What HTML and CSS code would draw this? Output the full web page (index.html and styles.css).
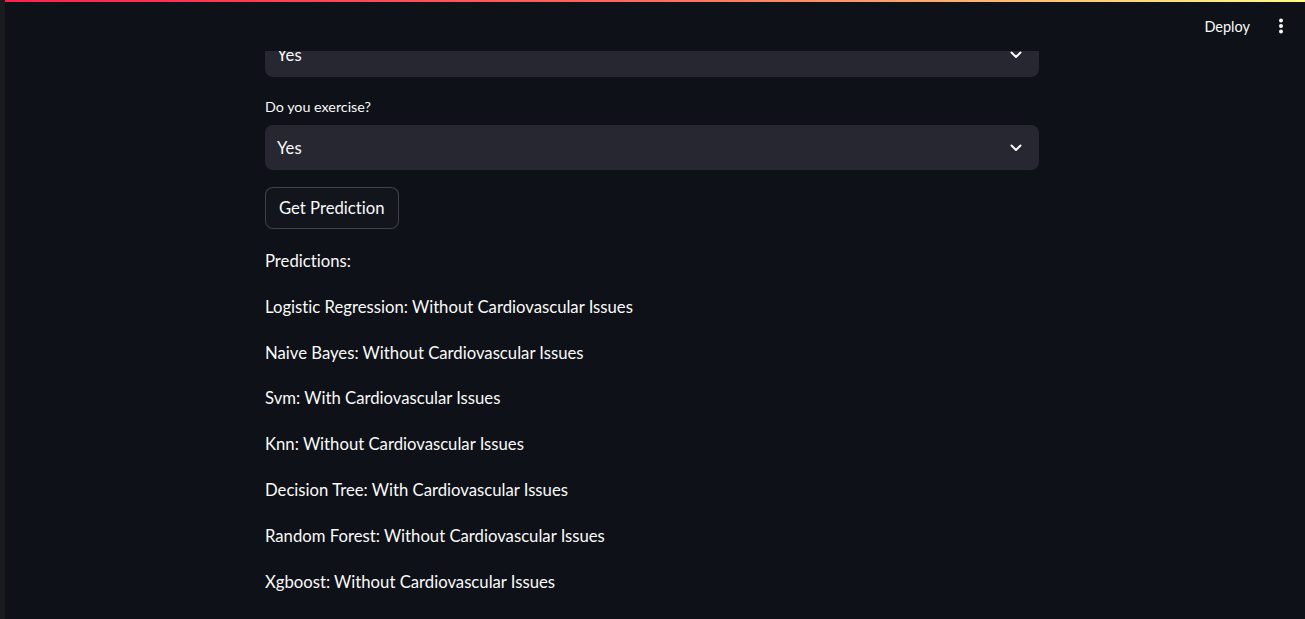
FILE: index.html
```html
<!DOCTYPE html>
<html lang="en">
<head>
<meta charset="utf-8">
<title>Cardiovascular Prediction</title>
<link rel="stylesheet" href="styles.css">
</head>
<body>
<div class="app">
  <div class="edge"></div>
  <div class="view">
    <header class="header">
      <div class="decoration"></div>
      <span class="deploy">Deploy</span>
      <svg class="menu" width="6" height="16" viewBox="0 0 6 16" aria-hidden="true">
        <circle cx="3" cy="2.5" r="2" fill="#fafafa"/>
        <circle cx="3" cy="8" r="2" fill="#fafafa"/>
        <circle cx="3" cy="13.5" r="2" fill="#fafafa"/>
      </svg>
    </header>
    <main class="main">
      <div class="select first">
        <span class="value">Yes</span>
        <svg class="chev" width="12" height="8" viewBox="0 0 12 8" aria-hidden="true"><path d="M1.5 1.5 L6 6 L10.5 1.5" fill="none" stroke="#fafafa" stroke-width="2" stroke-linecap="round" stroke-linejoin="round"/></svg>
      </div>
      <div class="field">
        <label class="label">Do you exercise?</label>
        <div class="select">
          <span class="value">Yes</span>
          <svg class="chev" width="12" height="8" viewBox="0 0 12 8" aria-hidden="true"><path d="M1.5 1.5 L6 6 L10.5 1.5" fill="none" stroke="#fafafa" stroke-width="2" stroke-linecap="round" stroke-linejoin="round"/></svg>
        </div>
      </div>
      <button class="btn">Get Prediction</button>
      <div class="results">
        <p>Predictions:</p>
        <p>Logistic Regression: Without Cardiovascular Issues</p>
        <p>Naive Bayes: Without Cardiovascular Issues</p>
        <p>Svm: With Cardiovascular Issues</p>
        <p>Knn: Without Cardiovascular Issues</p>
        <p>Decision Tree: With Cardiovascular Issues</p>
        <p>Random Forest: Without Cardiovascular Issues</p>
        <p>Xgboost: Without Cardiovascular Issues</p>
      </div>
    </main>
  </div>
</div>
</body>
</html>
```
FILE: styles.css
```css
html, body {
  margin: 0;
  padding: 0;
  height: 100%;
  overflow: hidden;
}
body {
  background: #0e1117;
  color: #fafafa;
  font-family: "Lato", "Noto Sans", sans-serif;
  font-variant-ligatures: none;
}
.app {
  display: flex;
  height: 100%;
}
.edge {
  width: 5px;
  flex: none;
  background: #1a1b1e;
}
.view {
  flex: 1;
  position: relative;
  overflow: hidden;
}
.header {
  position: absolute;
  top: 0;
  left: 0;
  right: 0;
  height: 51px;
  background: #0e1117;
  display: flex;
  align-items: center;
  justify-content: flex-end;
  padding-right: 21px;
  z-index: 2;
}
.decoration {
  position: absolute;
  top: 0;
  left: 0;
  right: 0;
  height: 2px;
  background: linear-gradient(90deg, #ff1f4e 0%, #ff6b5e 50%, #fffd80 100%);
}
.deploy {
  font-size: 14.5px;
  margin-right: 28px;
  margin-top: 1px;
}
.menu {
  display: block;
}
.main {
  display: flex;
  flex-direction: column;
  align-items: flex-start;
  width: 774px;
  margin-left: 260px;
  padding-top: 32px;
}
.select {
  box-sizing: border-box;
  width: 774px;
  height: 45px;
  background: #262730;
  border-radius: 8px;
  display: flex;
  align-items: center;
  justify-content: space-between;
  padding: 0 17px 0 12px;
  font-size: 16.7px;
}
.field {
  margin-top: 19px;
  display: flex;
  flex-direction: column;
}
.label {
  font-size: 14.3px;
  line-height: 21px;
  margin-bottom: 8px;
}
.btn {
  margin-top: 17px;
  box-sizing: border-box;
  height: 42px;
  padding: 0 13px;
  background: #12151c;
  color: #fafafa;
  border: 1px solid rgba(250, 250, 250, 0.2);
  border-radius: 8px;
  font-family: inherit;
  font-variant-ligatures: none;
  font-size: 16.7px;
}
.results {
  margin-top: 19px;
  display: flex;
  flex-direction: column;
  gap: 19.8px;
}
.results p {
  margin: 0;
  font-size: 16.7px;
  line-height: 26px;
}
.chev {
  display: block;
}
```
